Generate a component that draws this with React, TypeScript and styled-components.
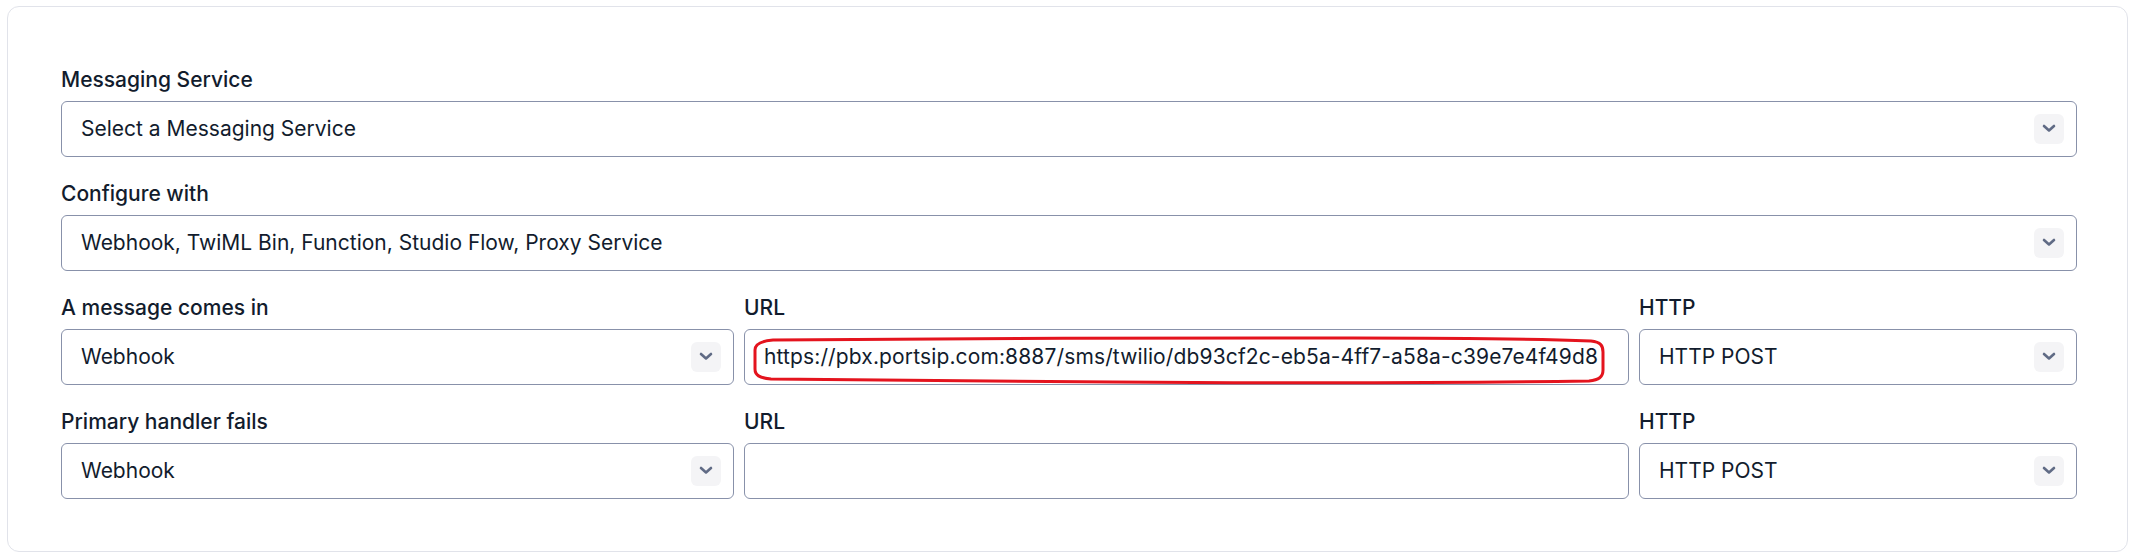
import React from "react";
import styled, { createGlobalStyle } from "styled-components";

const GlobalStyle = createGlobalStyle`
  html, body {
    margin: 0;
    padding: 0;
    background: #ffffff;
  }
  body {
    font-family: Inter, "Noto Sans", "Liberation Sans", sans-serif;
    color: #121c2d;
  }
`;

const Page = styled.div`
  padding: 6px 6px 5px 7px;
`;

const Card = styled.section`
  border: 1px solid #e1e3ea;
  border-radius: 12px;
  padding: 58px 50px 52px 53px;
  display: flex;
  flex-direction: column;
  gap: 22px;
`;

const Row = styled.div<{ $columns?: string }>`
  display: grid;
  grid-template-columns: ${(p) => p.$columns || "1fr"};
  column-gap: 10px;
`;

const Field = styled.div`
  display: flex;
  flex-direction: column;
  gap: 6px;
  min-width: 0;
`;

const Label = styled.label`
  font-size: 21px;
  line-height: 30px;
  font-weight: 500;
  color: #121c2d;
`;

const Box = styled.div`
  position: relative;
  box-sizing: border-box;
  height: 56px;
  border: 1px solid #8891aa;
  border-radius: 6px;
  background: #ffffff;
  display: flex;
  align-items: center;
  justify-content: space-between;
  padding: 0 12px 1px 19px;
  font-size: 21px;
  color: #121c2d;
  white-space: nowrap;
`;

const Value = styled.span<{ $spread?: boolean }>`
  overflow: hidden;
  letter-spacing: ${(p) => (p.$spread ? "0.13px" : "normal")};
`;

const ChevronBox = styled.span`
  width: 30px;
  height: 30px;
  border-radius: 6px;
  background: #f4f4f6;
  display: flex;
  align-items: center;
  justify-content: center;
  flex-shrink: 0;
`;

const Annotation = styled.svg`
  position: absolute;
  left: 8px;
  top: 6px;
  pointer-events: none;
`;

const Chevron = () => (
  <ChevronBox>
    <svg width="14" height="9" viewBox="0 0 14 9" fill="none">
      <path
        d="M2 2 L7 6.5 L12 2"
        stroke="#606b85"
        strokeWidth="2.6"
        strokeLinecap="round"
        strokeLinejoin="round"
      />
    </svg>
  </ChevronBox>
);

const SelectField: React.FC<{ label: string; value: string }> = ({ label, value }) => (
  <Field>
    <Label>{label}</Label>
    <Box>
      <Value>{value}</Value>
      <Chevron />
    </Box>
  </Field>
);

const UrlField: React.FC<{ value?: string; marked?: boolean }> = ({ value, marked }) => (
  <Field>
    <Label>URL</Label>
    <Box>
      <Value $spread>{value}</Value>
      {marked && (
        <Annotation width="854" height="50" viewBox="0 0 854 50">
          <path
            d="M20 4 C 200 3, 420 1, 600 2 C 700 2, 780 3, 838 5 C 848 6, 850 10, 850 16 L 850 34 C 850 41, 846 44, 836 45 C 700 47, 500 47, 360 46 C 220 45, 100 44, 18 43 C 6 42, 2 39, 2 33 L 2 14 C 2 8, 8 5, 20 4 Z"
            stroke="#e4141e"
            strokeWidth="3"
            fill="none"
            strokeLinejoin="round"
          />
        </Annotation>
      )}
    </Box>
  </Field>
);

const THREE_COLS = "673px 885px 1fr";

export default function App() {
  return (
    <>
      <GlobalStyle />
      <Page>
        <Card>
          <Row>
            <SelectField label="Messaging Service" value="Select a Messaging Service" />
          </Row>
          <Row>
            <SelectField
              label="Configure with"
              value="Webhook, TwiML Bin, Function, Studio Flow, Proxy Service"
            />
          </Row>
          <Row $columns={THREE_COLS}>
            <SelectField label="A message comes in" value="Webhook" />
            <UrlField
              value="https://pbx.portsip.com:8887/sms/twilio/db93cf2c-eb5a-4ff7-a58a-c39e7e4f49d8"
              marked
            />
            <SelectField label="HTTP" value="HTTP POST" />
          </Row>
          <Row $columns={THREE_COLS}>
            <SelectField label="Primary handler fails" value="Webhook" />
            <UrlField />
            <SelectField label="HTTP" value="HTTP POST" />
          </Row>
        </Card>
      </Page>
    </>
  );
}
